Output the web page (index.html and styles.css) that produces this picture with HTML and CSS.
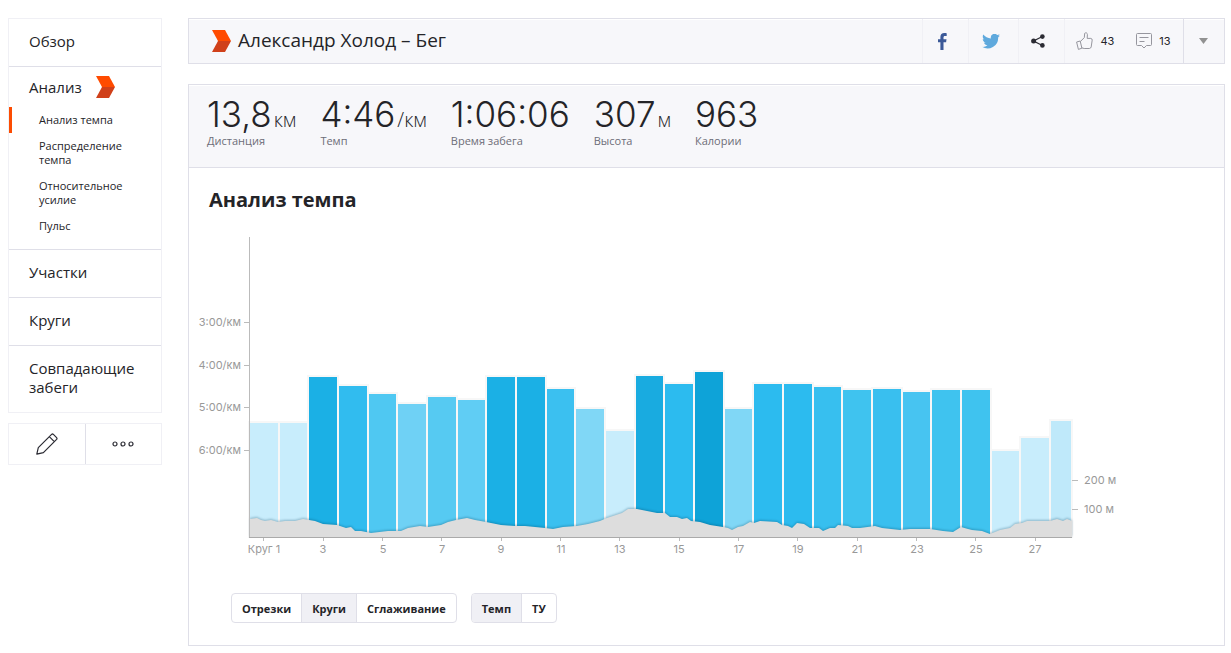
FILE: index.html
```html
<!DOCTYPE html>
<html lang="ru">
<head>
<meta charset="utf-8">
<title>Александр Холод – Бег</title>
<link rel="stylesheet" href="styles.css">
</head>
<body>
<div class="page">
  <aside class="sidebar">
    <nav class="menu">
      <a class="menu-link" href="#">Обзор</a>
      <div class="menu-group">
        <a class="menu-head" href="#">Анализ
          <svg class="chevron" viewBox="0 0 19 22" width="19" height="22" aria-hidden="true"><path fill="#ff4b00" d="M0 0h13l6 11H6z"/><path fill="#d0401a" d="M6 11h13l-6 11H0z"/></svg>
        </a>
        <a class="sub-link current" href="#">Анализ темпа</a>
        <a class="sub-link" href="#">Распределение темпа</a>
        <a class="sub-link" href="#">Относительное усилие</a>
        <a class="sub-link" href="#">Пульс</a>
      </div>
      <a class="menu-link" href="#">Участки</a>
      <a class="menu-link" href="#">Круги</a>
      <a class="menu-link" href="#">Совпадающие забеги</a>
    </nav>
    <div class="tools">
      <button class="tool" type="button" aria-label="Редактировать">
        <svg viewBox="0 0 22 22" width="22" height="22" fill="none" stroke="#2b2b33" stroke-width="1.2" stroke-linejoin="round"><path d="M.8 21.2l1.5-6.6L15.600 1.400q.9-.8 1.800 0l3.200 3.200q.8.900 0 1.800L7.400 19.700zM13.300 3.700l5 5"/></svg>
      </button>
      <button class="tool" type="button" aria-label="Ещё">
        <svg viewBox="0 0 22 6" width="22" height="6" fill="none" stroke="#2b2b33" stroke-width="1.200"><circle cx="3" cy="3" r="2"/><circle cx="11" cy="3" r="2"/><circle cx="19" cy="3" r="2"/></svg>
      </button>
    </div>
  </aside>

  <main class="main">
    <header class="topbar">
      <svg class="chevron" viewBox="0 0 19 22" width="19" height="22" aria-hidden="true"><path fill="#ff4b00" d="M0 0h13l6 11H6z"/><path fill="#d0401a" d="M6 11h13l-6 11H0z"/></svg>
      <h1 class="title">Александр Холод – Бег</h1>
      <button class="cell cell-fb" type="button" aria-label="Facebook">
        <svg viewBox="0 0 9 17" width="9" height="17"><path fill="#3b5998" d="M2.400 17V9.200H0V6.200h2.400V4.100C2.400 1.500 3.900 0 6.300 0 7.400 0 8.400.1 8.700.2V2.900H7C5.800 2.900 5.500 3.500 5.500 4.400v1.800h3L8.100 9.200H5.500V17z"/></svg>
      </button>
      <button class="cell cell-tw" type="button" aria-label="Twitter">
        <svg viewBox="0 3 24 20" width="18" height="15"><path fill="#5fa9dd" d="M24 5.100c-.9.400-1.800.7-2.800.8 1-.6 1.800-1.600 2.200-2.700-1 .6-2 1-3.100 1.200A4.900 4.900 0 0 0 11.900 8.900C7.800 8.700 4.100 6.700 1.700 3.700.4 5.900 1 8.800 3.200 10.300c-.8 0-1.600-.2-2.200-.6 0 2.300 1.600 4.400 3.900 4.900-.7.200-1.500.2-2.200.1.600 2 2.400 3.400 4.600 3.400A9.900 9.900 0 0 1 0 20.100 14 14 0 0 0 21.500 7.600c1-.7 1.800-1.600 2.500-2.500z"/></svg>
      </button>
      <button class="cell cell-share" type="button" aria-label="Поделиться">
        <svg viewBox="0 0 14 14" width="14" height="14"><path d="M11.400 2.500L2.500 7l8.900 4.500" fill="none" stroke="#2b2b33" stroke-width="1.300"/><g fill="#2b2b33"><circle cx="11.400" cy="2.600" r="2.300"/><circle cx="2.600" cy="7" r="2.500"/><circle cx="11.400" cy="11.400" r="2.300"/></g></svg>
      </button>
      <div class="cell cell-social">
        <button class="count" type="button" aria-label="Лайки: 43">
          <svg viewBox="0 0 17 18" width="17" height="18" fill="none" stroke="#96969e" stroke-width="1"><path d="M.6 10l3.600-1 1.700 7.200-3.500 1.200zM4.400 9.500L8.300 5.600l.4-4.300C9.900.2 11.300.9 11.400 2.500L11.200 6.400h3.600q1.500.3 1.400 1.700l-1 6.800q-.4 1.500-1.900 1.600H8.200l-2.500-.7"/></svg>
          <span>43</span>
        </button>
        <button class="count" type="button" aria-label="Комментарии: 13">
          <svg viewBox="0 0 16 16" width="16" height="16" fill="none" stroke="#96969e"><path d="M1.500.5h13q1 0 1 1v10q0 1-1 1h-4L8 15l-2.500-2.500h-4q-1 0-1-1v-10q0-1 1-1zM3.500 4.500h9M3.500 8.500h5"/></svg>
          <span>13</span>
        </button>
      </div>
      <button class="cell cell-more" type="button" aria-label="Меню">
        <svg viewBox="0 0 9 6" width="9" height="6"><path fill="#919191" d="M0 0h9L4.500 6z"/></svg>
      </button>
    </header>

    <section class="card">
      <ul class="stats">
        <li><strong>13,8<abbr>км</abbr></strong><span class="label">Дистанция</span></li>
        <li><strong>4:46<abbr>/км</abbr></strong><span class="label">Темп</span></li>
        <li><strong>1:06:06</strong><span class="label">Время забега</span></li>
        <li><strong>307<abbr>м</abbr></strong><span class="label">Высота</span></li>
        <li><strong>963</strong><span class="label">Калории</span></li>
      </ul>

      <h2 class="heading">Анализ темпа</h2>

      <svg class="chart" viewBox="-2 30 922 330" width="922" height="330" role="img" aria-label="Темп по кругам">
        <g class="bars">
          <rect x="49" y="222" width="30" height="115" fill="#c8edfc"/>
          <rect x="79" y="222" width="29" height="115" fill="#c8edfc"/>
          <rect x="108" y="176" width="30" height="161" fill="#1bb0e5"/>
          <rect x="138" y="185" width="30" height="152" fill="#31bcef"/>
          <rect x="168" y="193" width="29" height="144" fill="#4fc8f2"/>
          <rect x="197" y="203" width="30" height="134" fill="#6fd1f5"/>
          <rect x="227" y="196" width="30" height="141" fill="#56caf2"/>
          <rect x="257" y="199" width="29" height="138" fill="#60cdf4"/>
          <rect x="286" y="176" width="30" height="161" fill="#1bb0e5"/>
          <rect x="316" y="176" width="30" height="161" fill="#1bb0e5"/>
          <rect x="346" y="188" width="29" height="149" fill="#3bc0f0"/>
          <rect x="375" y="208" width="30" height="129" fill="#80d7f6"/>
          <rect x="405" y="230" width="30" height="107" fill="#c8edfc"/>
          <rect x="435" y="175" width="29" height="162" fill="#19abe0"/>
          <rect x="464" y="183" width="30" height="154" fill="#2cbbef"/>
          <rect x="494" y="171" width="30" height="166" fill="#0ea3d8"/>
          <rect x="524" y="208" width="29" height="129" fill="#80d7f6"/>
          <rect x="553" y="183" width="30" height="154" fill="#2cbbef"/>
          <rect x="583" y="183" width="30" height="154" fill="#2cbbef"/>
          <rect x="613" y="186" width="29" height="151" fill="#37bfef"/>
          <rect x="642" y="189" width="30" height="148" fill="#3fc3ef"/>
          <rect x="672" y="188" width="30" height="149" fill="#39bfef"/>
          <rect x="702" y="191" width="29" height="146" fill="#47c4f1"/>
          <rect x="731" y="189" width="30" height="148" fill="#3fc3ef"/>
          <rect x="761" y="189" width="30" height="148" fill="#3fc3ef"/>
          <rect x="791" y="250" width="29" height="87" fill="#c8edfc"/>
          <rect x="820" y="237" width="30" height="100" fill="#c8edfc"/>
          <rect x="850" y="220" width="22" height="117" fill="#bfe9fa"/>
        </g>
        <path class="elevation" d="M50 337V319L57 318 61 320 65 321 71 320 78 322 85 321 95 321 103 319 115 321 123 324 137 325 146 328 151 327 155 331 161 331 171 333 188 331 201 331 208 328 220 326 228 327 241 325 248 322 256 320 267 318 275 320 286 322 301 325 315 326 325 326 345 328 353 329 363 327 377 326 388 324 400 321 407 318 422 313 428 309 437 309 447 311 457 313 465 313 470 317 477 317 482 319 487 318 491 321 500 322 510 325 523 327 528 328 532 330 538 327 543 326 550 322 554 323 560 321 577 322 582 325 588 326 592 328 597 323 604 324 610 328 619 328 623 331 630 328 635 328 638 325 648 326 652 328 660 328 675 326 682 328 700 330 710 329 723 329 730 329 743 331 753 332 761 327 768 329 772 330 782 331 790 334 800 330 810 328 815 324 822 323 827 321 840 321 850 321 857 319 863 321 867 319 872 321V337z"/>
        <path class="axis" d="M49 37h1v301h-1zM44 122h5v1h-5zM44 165h5v1h-5zM44 207h5v1h-5zM44 250h5v1h-5zM872 280h6v1h-6zM872 309h6v1h-6z"/>
        <path class="axis" d="M63 338h1v3h-1zM123 338h1v3h-1zM182 338h1v3h-1zM241 338h1v3h-1zM301 338h1v3h-1zM360 338h1v3h-1zM419 338h1v3h-1zM479 338h1v3h-1zM538 338h1v3h-1zM597 338h1v3h-1zM657 338h1v3h-1zM716 338h1v3h-1zM775 338h1v3h-1zM835 338h1v3h-1z"/>
        <path class="base" d="M49 337h823v1h-823z"/>
        <g class="tick-y">
          <text x="41" y="126">3:00/км</text>
          <text x="41" y="169">4:00/км</text>
          <text x="41" y="211">5:00/км</text>
          <text x="41" y="254">6:00/км</text>
        </g>
        <g class="tick-r">
          <text x="884" y="284">200 м</text>
          <text x="884" y="313">100 м</text>
        </g>
        <g class="tick-x">
          <text x="64" y="353">Круг 1</text>
          <text x="123" y="353">3</text>
          <text x="183" y="353">5</text>
          <text x="242" y="353">7</text>
          <text x="301" y="353">9</text>
          <text x="361" y="353">11</text>
          <text x="420" y="353">13</text>
          <text x="479" y="353">15</text>
          <text x="539" y="353">17</text>
          <text x="598" y="353">19</text>
          <text x="657" y="353">21</text>
          <text x="717" y="353">23</text>
          <text x="776" y="353">25</text>
          <text x="835" y="353">27</text>
        </g>
      </svg>

      <div class="switches">
        <div class="switch">
          <button type="button">Отрезки</button>
          <button class="active" type="button">Круги</button>
          <button type="button">Сглаживание</button>
        </div>
        <div class="switch">
          <button class="active" type="button">Темп</button>
          <button type="button">ТУ</button>
        </div>
      </div>
    </section>
  </main>
</div>
</body>
</html>
```
FILE: styles.css
```css
* { box-sizing: border-box; }

body {
  margin: 0;
  background: #fff;
  color: #242428;
  font-family: "Open Sans", "Noto Sans", sans-serif;
  font-size: 15px;
}

a { color: inherit; text-decoration: none; }

button {
  margin: 0;
  padding: 0;
  border: 0;
  background: none;
  color: inherit;
  font: inherit;
  cursor: pointer;
}

svg { display: block; flex: none; }

.page {
  display: flex;
  align-items: flex-start;
  gap: 26px;
  padding: 18px 6px 7px 8px;
}

/* Sidebar */
.sidebar { flex: 0 0 154px; }

.menu { border: 1px solid #f0f0f5; }

.menu-link {
  display: block;
  padding: 13px 20px 15px;
  line-height: 19px;
}

.menu-link + .menu-link,
.menu-group,
.menu-group + .menu-link { border-top: 1px solid #dfdfe8; }

.menu-group { padding-bottom: 10px; }

.menu-head {
  display: flex;
  align-items: center;
  gap: 14px;
  height: 40px;
  padding-left: 20px;
  line-height: 19px;
}

.sub-link {
  display: block;
  padding: 6px 20px 6px 27px;
  border-left: 3px solid transparent;
  font-size: 11px;
  line-height: 14px;
}

.current { border-left-color: #fc4c02; }

.tools {
  display: flex;
  height: 42px;
  margin-top: 10px;
  border: 1px solid #f0f0f5;
}

.tool {
  display: flex;
  flex: 1;
  align-items: center;
  justify-content: center;
}

.tool + .tool { border-left: 1px solid #dfdfe8; }

/* Title bar */
.main { flex: 1; min-width: 0; }

.topbar {
  display: flex;
  align-items: center;
  height: 46px;
  padding-left: 23px;
  border: 1px solid #dfdfe8;
  background: #f7f7fa;
  box-shadow: inset 0 1px #fff;
}

.title {
  flex: 1;
  margin: 0 0 2px 7px;
  font-size: 19px;
  font-weight: 400;
  line-height: 24px;
}

.cell {
  display: flex;
  align-items: center;
  justify-content: center;
  align-self: stretch;
  border-left: 1px solid #f0f0f5;
}

.cell-fb { width: 46px; padding-right: 6px; }
.cell-tw { width: 50px; padding-right: 6px; }
.cell-share { width: 46px; padding-right: 7px; }
.cell-social { width: 119px; padding-right: 1px; gap: 22px; }
.cell-more { width: 41px; padding-right: 2px; border-left-color: #dfdfe8; }

.count {
  display: flex;
  align-items: center;
  gap: 7px;
  font-family: Inter, sans-serif;
  font-size: 11px;
}

/* Activity card */
.card {
  margin-top: 20px;
  padding-bottom: 22px;
  border: 1px solid #dfdfe8;
}

.stats {
  display: flex;
  gap: 24px;
  height: 83px;
  margin: 0;
  padding: 9px 18px 0;
  border-bottom: 1px solid #dfdfe8;
  background: #f7f7fa;
  box-shadow: inset 0 1px #fff;
  list-style: none;
}

.stats strong {
  display: block;
  font-family: Inter, sans-serif;
  font-size: 35px;
  font-weight: 300;
  line-height: 40px;
}

.stats abbr {
  margin-left: 2px;
  font-family: "Open Sans", "Noto Sans", sans-serif;
  font-size: 20px;
  line-height: 20px;
}

.label {
  display: block;
  color: #6d6d78;
  font-size: 11px;
  line-height: 14px;
}

.heading {
  margin: 18px 20px 0;
  font-size: 20px;
  font-weight: 700;
  line-height: 28px;
}

/* Pace chart */
.chart {
  max-width: 100%;
  margin: 16px 0 0 9px;
  overflow: visible;
  font-family: Inter, "Open Sans", sans-serif;
  font-size: 11px;
  fill: #999;
}

.bars rect {
  stroke: #f7f7f7;
  stroke-width: 2px;
  shape-rendering: crispEdges;
}

.elevation {
  fill: #ddd;
  filter: drop-shadow(0 -1px 1px rgba(0, 60, 90, 0.3));
}

.axis { fill: #bbb; }
.base { fill: #aaa; }
.tick-y { text-anchor: end; }
.tick-x { text-anchor: middle; }

/* Mode switches */
.switches {
  display: flex;
  gap: 14px;
  margin: 33px 0 0 42px;
}

.switch {
  display: flex;
  height: 30px;
  overflow: hidden;
  border: 1px solid #dfdfe8;
  border-radius: 4px;
}

.switch button {
  padding: 0 10px;
  font-size: 11px;
  font-weight: 700;
}

.switch button + button { border-left: 1px solid #dfdfe8; }
.switch .active { background: #f0f0f5; }
```
